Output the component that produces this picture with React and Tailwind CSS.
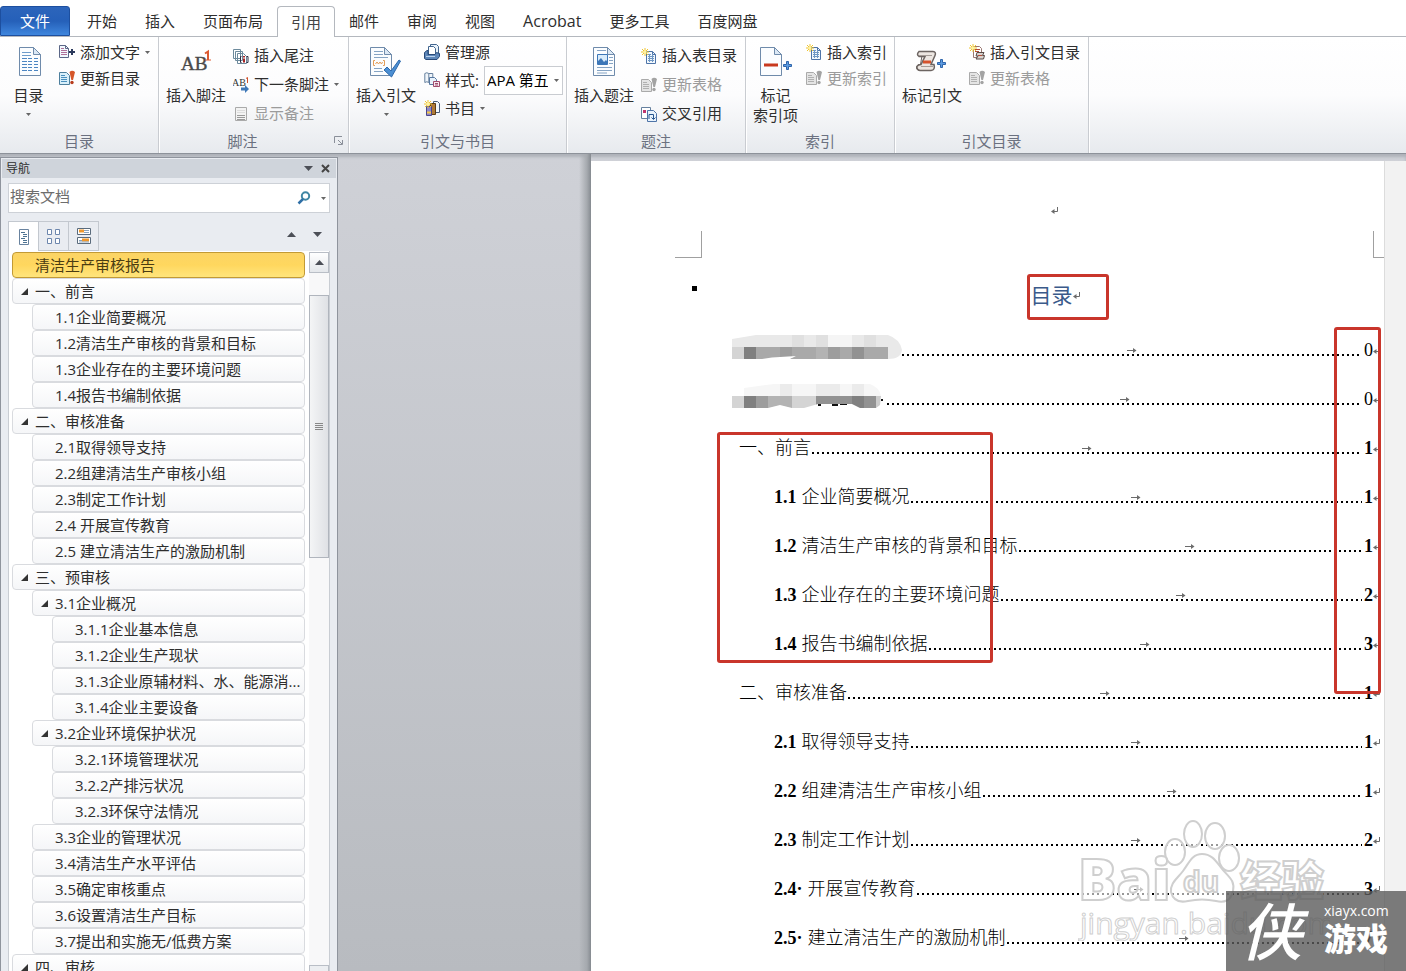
import React from "react";

const UI = "font-['Open_Sans','Noto_Sans_CJK_SC',sans-serif]";

const Caret = ({ className = "" }) => (
  <svg className={className} width="5" height="3" viewBox="0 0 5 3" aria-hidden="true">
    <path d="M0 0h5L2.500 3z" fill="#666" />
  </svg>
);

/* ---------- 16px icons ---------- */
const Svg16 = ({ children }) => (
  <svg className="shrink-0" width="16" height="16" viewBox="0 0 16 16" fill="none" aria-hidden="true">
    {children}
  </svg>
);
const SmallDoc = ({ x = 0, y = 0, stroke = "#5f7fa6", fill = "#f2f8fd", line = "#6f97c4" }) => (
  <g transform={`translate(${x} ${y})`}>
    <path d="M.5.5h6l3 3v9h-9z" fill={fill} stroke={stroke} />
    <path d="M6.500.5v3h3" stroke={stroke} />
    <path d="M2 3.500h3M2 5.500h6M2 7.500h6M2 9.500h6" stroke={line} />
  </g>
);
const Star = () => (
  <g>
    <path d="M4 0v8M0 4h8M1 1l6 6M7 1L1 7" stroke="#f0c52e" strokeWidth="1" />
    <circle cx="4" cy="4" r="1.500" fill="#fff3a0" />
  </g>
);
const AddTextIcon = () => (
  <Svg16>
    <SmallDoc y={1} stroke="#5b6787" line="#b0719a" />
    <path d="M13 5v6M10 8h6" stroke="#2b3a5c" strokeWidth="2" />
  </Svg16>
);
const UpdateIcon = ({ off }) => (
  <Svg16>
    <path d="M.5 2.500h7l3 3v9H.5z" fill={off ? "#e4e4e4" : "#d8effa"} stroke={off ? "#aaa" : "#4d7f9d"} />
    <path d="M2 5.500h4M2 7.500h6M2 9.500h6M2 11.500h6" stroke={off ? "#b0b0b0" : "#4a8fbd"} />
    <path d="M10.500 2q2.500-2.500 5.500 0L14 10h-1.600z" fill={off ? "#a3a3a3" : "#d5562a"} />
    <circle cx="13" cy="12.500" r="1.700" fill={off ? "#a3a3a3" : "#b73b1c"} />
  </Svg16>
);
const EndnoteIcon = () => (
  <Svg16>
    <path d="M.5 1.500h7v9h-7zM2.500 3.500h7v9h-7zM4.500 5.500h6l3 3v7h-9z" fill="#fff" stroke="#6d8a9c" />
    <path d="M8.500 8.500H7.500v6h1M13.500 8.500H15v6h-1.500" stroke="#2b2d42" />
    <path d="M11 8v1.500M11 10.500v4" stroke="#a82525" strokeWidth="2" />
  </Svg16>
);
const NextNoteIcon = () => (
  <Svg16>
    <text x="-1" y="9" fontSize="10" fontFamily="Liberation Serif" fill="#333">AB</text>
    <path d="M13 1.500l1.500-1V6" stroke="#d2512a" />
    <path d="M8 10.500h4V8l4 4-4 4v-2.500H8z" fill="#3f78b8" />
  </Svg16>
);
const ShowNotesIcon = () => (
  <Svg16>
    <path d="M2.500 1.500h11v13h-11z" fill="#f3f3f3" stroke="#aaa" />
    <path d="M4 4.500h8M4 6.500h8" stroke="#ddd" />
    <path d="M4 9.500h8M4 11.500h8M4 13.500h8" stroke="#999" />
  </Svg16>
);
const SourcesIcon = () => (
  <Svg16>
    <path d="M6.500.5h6l2 2v8h-8z" fill="#eaf3fb" stroke="#41658f" />
    <path d="M4.500 2.500h5l2 2v7h-7z" fill="#fff" stroke="#41658f" />
    <path d="M.5 8.500L3 6.500h1v4h7l1.500-2 3 1v3l-2.500 3H2l-1.500-1z" fill="#5d87b9" stroke="#294a79" />
    <path d="M2 12.500h9" stroke="#b9d1ec" />
  </Svg16>
);
const StyleIcon = () => (
  <Svg16>
    <path d="M.8 1.500q2-1.500 4 0v9q-2-1.500-4 0zM4.800 1.500h4v7" fill="#f0f5fa" stroke="#66809e" />
    <path d="M5.500 5.500h5l2 2v5h-7z" fill="#e8f2fb" stroke="#56779f" />
    <path d="M9.500 9.500h6v5h-6z" fill="#f7e8ef" stroke="#a04c6d" />
    <path d="M11 11.500h3M11 13h3" stroke="#a04c6d" />
  </Svg16>
);
const BibliographyIcon = () => (
  <Svg16>
    <path d="M9.500 1.500h4l2 2v9h-6z" fill="#f4f8fc" stroke="#495d7c" />
    <path d="M6.500 3.500h5v11h-5z" fill="#b07a38" stroke="#5b3d16" />
    <path d="M2.500 6.500h5v9h-5z" fill="#8f88c9" stroke="#4c478a" />
    <path d="M3 12.500h4" stroke="#f5c845" strokeWidth="2" />
    <Star />
  </Svg16>
);
const NewListIcon = () => (
  <Svg16>
    <SmallDoc x={5} y={3} stroke="#4e74a8" />
    <path d="M8.500 6v8M11.500 6v8" stroke="#6f97c4" />
    <Star />
  </Svg16>
);
const CrossRefIcon = () => (
  <Svg16>
    <path d="M.5 1.500h9v11h-9z" fill="#fff" stroke="#66809e" />
    <path d="M2 4h3v3H2z" fill="#c2356e" />
    <path d="M6.500 4.500h6l3 3v8h-9z" fill="#e9f3fc" stroke="#4e74a8" />
    <path d="M8 13V8.500h4.500V13m-2-1.500l2 2 2-2" stroke="#26558f" />
  </Svg16>
);
const AuthoritiesIcon = () => (
  <Svg16>
    <path d="M4.500 2.500h6l2 2v9h-8z" fill="#fff" stroke="#9a7770" />
    <path d="M6 5.500h5M6 7.500h4" stroke="#b54a39" />
    <path d="M8 8.500h7l-1.500 3h2l-1 3.500H7l2-3H7z" fill="#d9d2cd" stroke="#584b47" />
    <path d="M9 11.500h4" stroke="#b54a39" />
    <Star />
  </Svg16>
);

/* ---------- 36px icons ---------- */
const Svg36 = ({ children }) => (
  <svg width="36" height="36" viewBox="0 0 36 36" fill="none" aria-hidden="true">
    {children}
  </svg>
);
const BigPage = ({ x = 8, children }) => (
  <g transform={`translate(${x} 2)`}>
    <path d="M.5.5h14l7 7v21h-21z" fill="#fbfdff" stroke="#6f8bab" />
    <path d="M14.500.5v7h7z" fill="#dbe8f5" stroke="#6f8bab" />
    {children}
  </g>
);
const TocIcon = () => (
  <Svg36>
    <BigPage>
      <path d="M3 5.500h9M3 8.500h9" stroke="#6e9ccb" />
      <path d="M3 11.500h10M3 14.500h10M3 17.500h10M3 20.500h10M3 23.500h10" stroke="#4d86c2" strokeDasharray="5 1" />
      <path d="M15 11.500h4M15 14.500h4M15 17.500h4M15 20.500h4M15 23.500h4" stroke="#4d86c2" />
    </BigPage>
  </Svg36>
);
const FootnoteIcon = () => (
  <Svg36>
    <text x="3" y="25" fontSize="19" fontFamily="Liberation Serif" fill="#4a4a4a" stroke="#4a4a4a" strokeWidth=".4">AB</text>
    <path d="M27 8.500l3-2V15" stroke="#dc5a31" strokeWidth="2" />
    <path d="M27 15h6" stroke="#dc5a31" />
  </Svg36>
);
const CitationIcon = () => (
  <Svg36>
    <BigPage x={2}>
      <path d="M4 4.500h9M4 7.500h9M4 10.500h14M4 21.500h8M4 24.500h9" stroke="#86a4c4" />
      <path d="M5 13.500H3.500v5H5M13 13.500h1.500v5H13" stroke="#e39d59" />
      <path d="M5.500 17l1.500-2 1.500 2 1.500-2 1.500 2 1-2" stroke="#e39d59" />
    </BigPage>
    <path d="M16 25l3-3 4 4 8-11 1.500 1L23.500 32z" fill="#4b8ed2" stroke="#2e69ab" />
  </Svg36>
);
const CaptionIcon = () => (
  <Svg36>
    <BigPage x={7}>
      <path d="M4 3.500h9" stroke="#86a4c4" />
      <path d="M4.500 7.500h10v10h-10z" fill="#d8ebfa" stroke="#3d77b8" />
      <path d="M5 17v-3l3-3 3 4 2-2 1.500 2v2z" fill="#3d77b8" />
      <path d="M16 10.500h4M16 13.500h4M16 16.500h4M4 20.500h15M4 23.500h15M4 26h10" stroke="#86a4c4" />
    </BigPage>
  </Svg36>
);
const Plus = ({ x, y }) => (
  <path transform={`translate(${x} ${y})`} d="M3.500.5h2v3h3v2h-3v3h-2v-3h-3v-2h3z" fill="#5c9be0" stroke="#2f65ab" />
);
const IndexIcon = () => (
  <Svg36>
    <BigPage x={2}>
      <path d="M4 18h14" stroke="#c8391f" strokeWidth="3" />
    </BigPage>
    <Plus x={25} y={16} />
  </Svg36>
);
const MarkCitationIcon = () => (
  <Svg36>
    <path d="M8 10.500h10l-4 9q-1 5 3 6H6q-4-.5-3.500-4 1-2.500 4-2z" fill="#f4f0ed" stroke="#6c6461" />
    <path d="M5 6.500h14q3.500.5 2 4l-4 9h3q1.500 5.500-3 6H6q-3.500-.5-3-4 1-2 4-2l4-8H5q-3-2 0-5z" fill="#ece6e1" stroke="#6c6461" strokeWidth="1.500" />
    <path d="M5 10.500h13M7 21.500h12" stroke="#a59c97" />
    <path d="M9 17h8" stroke="#d6532c" strokeWidth="3" />
    <Plus x={23} y={14} />
  </Svg36>
);

/* ---------- ribbon ---------- */
const BigButton = ({ icon, lines, caret, width = "w-[74px]" }) => (
  <button type="button" className={`flex ${width} shrink-0 flex-col items-center pt-2`}>
    {icon}
    <span className="mt-1 leading-5">
      {lines.map((l) => (
        <span key={l} className="block">{l}</span>
      ))}
    </span>
    {caret && <Caret className="mt-2" />}
  </button>
);
const SmallButton = ({ icon, label, caret, off, h = "h-[29px]" }) => (
  <button type="button" disabled={off} className={`flex items-center gap-[5px] ${h} ${off ? "text-[#9b9b9b]" : ""}`}>
    {icon}
    <span>{label}</span>
    {caret && <Caret />}
  </button>
);
const Group = ({ title, width, launcher, children }) => (
  <section aria-label={title} className={`flex ${width} shrink-0 flex-col border-r border-[#c9ccd1] shadow-[1px_0_0_#fff]`}>
    <div className="flex flex-1">{children}</div>
    <div className="flex h-6 items-center text-[#6b7180]">
      <span className="flex-1 text-center">{title}</span>
      {launcher && (
        <button type="button" aria-label="脚注和尾注" className="mr-1 ml-2">
          <svg width="10" height="10" viewBox="0 0 10 10" fill="none">
            <path d="M.5 7V.5H8M4 4l4 4M8.500 4v4.500H4" stroke="#8a8f99" />
          </svg>
        </button>
      )}
    </div>
  </section>
);

const tabsBefore = ["开始", "插入", "页面布局"];
const tabsAfter = ["邮件", "审阅", "视图", "Acrobat", "更多工具", "百度网盘"];

const Ribbon = () => (
  <header className="shrink-0 bg-white">
    <nav className="flex h-[37px] items-end border-b border-[#b4b8be] pt-1.5">
      <button type="button" className="h-[30px] w-[70px] rounded-t-[3px] border border-[#1d4f9f] bg-linear-to-b from-[#2c65bb] via-[#2560b9] to-[#3f86dd] text-white">文件</button>
      <div className="w-[3px]" />
      {tabsBefore.map((t) => (
        <button type="button" key={t} className="h-[30px] px-3.5">{t}</button>
      ))}
      <button type="button" className="-mb-px h-[31px] rounded-t border border-b-0 border-[#b4b8be] bg-white px-[13px] text-[#444]">引用</button>
      {tabsAfter.map((t) => (
        <button type="button" key={t} className={`h-[30px] px-3.5 ${t === "Acrobat" ? "text-[16px]" : ""}`}>{t}</button>
      ))}
    </nav>
    <div className="flex h-[117px] border-b border-[#8d929a] bg-linear-to-b from-white via-[#fcfcfd] to-[#e7eaee]">
      <Group title="目录" width="w-[159px]">
        <BigButton icon={<TocIcon />} lines={["目录"]} caret width="w-[57px]" />
        <div className="pt-0.5 pl-0.5">
          <SmallButton h="h-[26px]" icon={<AddTextIcon />} label="添加文字" caret />
          <SmallButton h="h-[26px]" icon={<UpdateIcon />} label="更新目录" />
        </div>
      </Group>
      <Group title="脚注" width="w-[190px]" launcher>
        <BigButton icon={<FootnoteIcon />} lines={["插入脚注"]} />
        <div className="pt-1">
          <SmallButton icon={<EndnoteIcon />} label="插入尾注" />
          <SmallButton icon={<NextNoteIcon />} label="下一条脚注" caret />
          <SmallButton icon={<ShowNotesIcon />} label="显示备注" off />
        </div>
      </Group>
      <Group title="引文与书目" width="w-[218px]">
        <BigButton icon={<CitationIcon />} lines={["插入引文"]} caret />
        <div className="pt-px pl-px">
          <SmallButton h="h-7" icon={<SourcesIcon />} label="管理源" />
          <div className="flex h-7 items-center gap-[5px]">
            <StyleIcon />
            <label htmlFor="cite-style">样式:</label>
            <span className="relative flex items-center">
              <select id="cite-style" className="h-[29px] w-[79px] appearance-none overflow-hidden border border-[#c9ccd1] bg-white pr-3.5 pl-0.5 text-black">
                <option>APA 第五版</option>
              </select>
              <Caret className="pointer-events-none absolute right-1" />
            </span>
          </div>
          <SmallButton h="h-7" icon={<BibliographyIcon />} label="书目" caret />
        </div>
      </Group>
      <Group title="题注" width="w-[179px]">
        <BigButton icon={<CaptionIcon />} lines={["插入题注"]} />
        <div className="pt-1">
          <SmallButton icon={<NewListIcon />} label="插入表目录" />
          <SmallButton icon={<UpdateIcon off />} label="更新表格" off />
          <SmallButton icon={<CrossRefIcon />} label="交叉引用" />
        </div>
      </Group>
      <Group title="索引" width="w-[149px]">
        <BigButton icon={<IndexIcon />} lines={["标记", "索引项"]} width="w-[59px]" />
        <div className="pt-0.5 pl-px">
          <SmallButton h="h-[26px]" icon={<NewListIcon />} label="插入索引" />
          <SmallButton h="h-[26px]" icon={<UpdateIcon off />} label="更新索引" off />
        </div>
      </Group>
      <Group title="引文目录" width="w-[194px]">
        <BigButton icon={<MarkCitationIcon />} lines={["标记引文"]} />
        <div className="pt-0.5">
          <SmallButton h="h-[26px]" icon={<AuthoritiesIcon />} label="插入引文目录" />
          <SmallButton h="h-[26px]" icon={<UpdateIcon off />} label="更新表格" off />
        </div>
      </Group>
    </div>
  </header>
);

/* ---------- navigation pane ---------- */
const outline = [
  [0, "一、前言", true],
  [1, "1.1企业简要概况"],
  [1, "1.2清洁生产审核的背景和目标"],
  [1, "1.3企业存在的主要环境问题"],
  [1, "1.4报告书编制依据"],
  [0, "二、审核准备", true],
  [1, "2.1取得领导支持"],
  [1, "2.2组建清洁生产审核小组"],
  [1, "2.3制定工作计划"],
  [1, "2.4 开展宣传教育"],
  [1, "2.5 建立清洁生产的激励机制"],
  [0, "三、预审核", true],
  [1, "3.1企业概况", true],
  [2, "3.1.1企业基本信息"],
  [2, "3.1.2企业生产现状"],
  [2, "3.1.3企业原辅材料、水、能源消..."],
  [2, "3.1.4企业主要设备"],
  [1, "3.2企业环境保护状况", true],
  [2, "3.2.1环境管理状况"],
  [2, "3.2.2产排污状况"],
  [2, "3.2.3环保守法情况"],
  [1, "3.3企业的管理状况"],
  [1, "3.4清洁生产水平评估"],
  [1, "3.5确定审核重点"],
  [1, "3.6设置清洁生产目标"],
  [1, "3.7提出和实施无/低费方案"],
  [0, "四、审核", true],
];
const indent = ["ml-0", "ml-5", "ml-10"];

const OutlineItem = ({ level, label, open, selected }) => (
  <li className={indent[level]}>
    <button
      type="button"
      className={`flex h-[26px] w-full items-center rounded border whitespace-nowrap ${
        selected
          ? "border-[#c29a35] bg-linear-to-b from-[#fbd465] via-[#ffd75e] to-[#ffe57c] text-[#4a3c12]"
          : "border-[#d9dbdf] bg-linear-to-b from-white to-[#f5f6f8]"
      }`}
    >
      <span className="flex w-[22px] shrink-0 justify-center">
        {open && (
          <svg width="7" height="7" viewBox="0 0 7 7" aria-hidden="true">
            <path d="M7 0v7H0z" fill="#333" />
          </svg>
        )}
      </span>
      {label}
    </button>
  </li>
);

const Triangle = ({ up }) => (
  <svg width="9" height="5" viewBox="0 0 9 5" aria-hidden="true">
    <path d={up ? "M0 5h9L4.500 0z" : "M0 0h9L4.500 5z"} fill="#4c4f57" />
  </svg>
);

const NavPane = () => (
  <aside className="mt-[3px] flex w-[338px] shrink-0 flex-col border border-b-0 border-[#8f949d] bg-[#e9ecf1] pt-px">
    <div className="mx-px flex h-[19px] items-center bg-[#cfd4db] pr-1.5 pl-1 text-[12px]">
      <h2 className="flex-1">导航</h2>
      <button type="button" aria-label="任务窗格选项" className="mr-2"><Triangle /></button>
      <button type="button" aria-label="关闭">
        <svg width="9" height="9" viewBox="0 0 9 9" fill="none">
          <path d="M1 1l7 7M8 1L1 8" stroke="#444" strokeWidth="2" />
        </svg>
      </button>
    </div>
    <div className="mx-[7px] mt-[5px] flex h-[30px] items-center border border-[#cdd1d7] bg-white pr-[3px] pl-px">
      <input aria-label="搜索文档" placeholder="搜索文档" className="min-w-0 flex-1 bg-transparent pb-1 outline-none placeholder:text-[#6d6d6d]" />
      <button type="button" aria-label="搜索" className="mr-2.5">
        <svg width="14" height="14" viewBox="0 0 14 14" fill="none">
          <circle cx="8.500" cy="5" r="3.700" stroke="#3f86a3" strokeWidth="2" />
          <path d="M6 8l-4.500 4.500" stroke="#2f6fa6" strokeWidth="2.500" />
        </svg>
      </button>
      <Caret />
    </div>
    <div className="mx-[7px] mt-2 flex h-[30px] items-center">
      <button type="button" aria-label="浏览标题" className="flex h-full w-[31px] items-center justify-center border border-b-0 border-[#c3c8cf] bg-white">
        <svg width="10" height="16" viewBox="0 0 10 16" fill="none">
          <path d="M.5.5h9v15h-9z" fill="#fff" stroke="#69839f" />
          <path d="M2 3.500h4M4 5.500h4M4 7.500h4M2 9.500h4M4 11.500h4M4 13.500h4" stroke="#4d7392" />
        </svg>
      </button>
      <button type="button" aria-label="浏览页面" className="flex h-full w-[30px] items-center justify-center border-y border-r border-[#c3c8cf]">
        <svg width="13" height="15" viewBox="0 0 13 15" fill="none">
          <path d="M.5.5h4v5h-4zM8.500.5h4v5h-4zM.5 9.500h4v5h-4zM8.500 9.500h4v5h-4z" fill="#fff" stroke="#6c86ad" />
        </svg>
      </button>
      <button type="button" aria-label="浏览搜索结果" className="flex h-full w-[30px] items-center justify-center border-y border-r border-[#c3c8cf]">
        <svg width="14" height="16" viewBox="0 0 14 16" fill="none">
          <path d="M.5.5h13v6h-13zM.5 9.500h13v6h-13z" fill="#fff" stroke="#5a6b7c" />
          <path d="M2 3h5M5 12h7" stroke="#f0982d" strokeWidth="3" />
          <path d="M7 2.500h5M7 4.500h5M2 12.500h3M2 14h10" stroke="#89a2bb" />
        </svg>
      </button>
      <div className="flex-1" />
      <button type="button" aria-label="上一标题" className="mr-[17px] mb-1"><Triangle up /></button>
      <button type="button" aria-label="下一标题" className="mr-2 mb-1"><Triangle /></button>
    </div>
    <div className="mx-[7px] flex min-h-0 flex-1 border-x border-[#c9cdd3] bg-white pt-px">
      <ul className="min-w-0 flex-1 overflow-hidden pl-[3px]">
        <OutlineItem level={0} label="清洁生产审核报告" selected />
        {outline.map(([level, label, open]) => (
          <OutlineItem key={label} level={level} label={label} open={open} />
        ))}
      </ul>
      <div className="ml-1 flex w-5 shrink-0 flex-col bg-[#f8f8f9]" aria-hidden="true">
        <div className="flex h-[21px] items-center justify-center border border-[#b9bec6] bg-linear-to-b from-white to-[#e4e7eb]">
          <Triangle up />
        </div>
        <div className="mt-[22px] flex h-[263px] flex-col items-center justify-center gap-px border border-[#b0b5bd] bg-linear-to-r from-[#f4f5f6] to-[#dfe1e5]">
          <i className="h-px w-2 bg-[#888]" />
          <i className="h-px w-2 bg-[#888]" />
          <i className="h-px w-2 bg-[#888]" />
          <i className="h-px w-2 bg-[#888]" />
        </div>
        <div className="flex-1" />
        <div className="h-1.5 border border-b-0 border-[#b9bec6] bg-[#eceef1]" />
      </div>
    </div>
  </aside>
);

/* ---------- document ---------- */
const ReturnMark = () => (
  <svg className="shrink-0" width="8" height="8" viewBox="0 0 8 8" fill="none" aria-hidden="true">
    <path d="M6.500 0v4.500H2" stroke="#6b6b6b" />
    <path d="M0 4.500L3.500 2v5z" fill="#6b6b6b" />
  </svg>
);
const TabArrow = () => (
  <svg className="absolute top-px left-1/2 -translate-x-1/2" width="10" height="7" viewBox="0 0 10 7" fill="none" aria-hidden="true">
    <path d="M0 3.500h8" stroke="#6b6b6b" />
    <path d="M6 1l3.500 2.500L6 6z" fill="#6b6b6b" />
  </svg>
);

const tone = ["fill-[#d4d4d4]", "fill-[#808080]", "fill-[#9d9d9d]", "fill-[#a9a9a9]", "fill-[#929292]", "fill-[#b3b3b3]"];
const mosaicA = [0, 1, 3, 3, 2, 3, 3, 5, 2, 3, 4, 3, 3];
const mosaicB = [0, 1, 2, 5, 5, 0, 0, 4, 4, 4, 1, 4];

const MosaicA = () => (
  <svg className="mb-2 shrink-0" width="170" height="24" viewBox="0 0 170 24" aria-hidden="true">
    <path d="M0 4L24 0h132q12 4 14 15-1 9-14 9H0z" fill="#e9e9e9" />
    <path d="M60 0h12v12H60zM84 0h12v12H84zM132 0h12v12h-12z" fill="#e0e0e0" />
    <path d="M96 0h24v12H96z" fill="#f5f5f5" />
    {mosaicA.map((t, i) => (
      <rect key={i} x={i * 12} y="12" width="12" height="12" className={tone[t]} />
    ))}
    <path d="M30 24l10-1.500 24-1.500-6 3z" fill="#fff" />
  </svg>
);
const MosaicB = () => (
  <svg className="mr-1 mb-2 shrink-0" width="151" height="24" viewBox="0 0 151 24" aria-hidden="true">
    <path d="M12 4l30-4h96q10 4 11 12H12z" fill="#f6f6f6" />
    <path d="M48 0h12v12H48zM84 0h24v12H84zM120 0h12v12h-12z" fill="#ebebeb" />
    {mosaicB.map((t, i) => (
      <rect key={i} x={i * 12} y="12" width="12" height="12" className={tone[t]} />
    ))}
    <path d="M144 12h5l-1 9-4 3z" fill="#ccc" />
    <path d="M36 24l12-3 12 3zM72 24l14-4 34 0 8 4z" fill="#fff" />
    <path d="M86 20h3v2h-3zM100 20h6v2h-6zM108 20h7v1h-7zM149 15h2v2h-2z" fill="#111" />
  </svg>
);

const toc = [
  { art: <MosaicA />, page: 0, plain: true },
  { art: <MosaicB />, page: 0, plain: true },
  { text: "一、前言", page: 1 },
  { num: "1.1", text: "企业简要概况", page: 1 },
  { num: "1.2", text: "清洁生产审核的背景和目标", page: 1 },
  { num: "1.3", text: "企业存在的主要环境问题", page: 2 },
  { num: "1.4", text: "报告书编制依据", page: 3 },
  { text: "二、审核准备", page: 1 },
  { num: "2.1", text: "取得领导支持", page: 1 },
  { num: "2.2", text: "组建清洁生产审核小组", page: 1 },
  { num: "2.3", text: "制定工作计划", page: 2 },
  { num: "2.4·", text: "开展宣传教育", page: 3 },
  { num: "2.5·", text: "建立清洁生产的激励机制", page: 7 },
];

const TocRow = ({ art, num, text, page, plain }) => (
  <li className={`flex h-[49px] items-center ${num ? "pl-[42px]" : art ? "" : "pl-[7px]"}`}>
    {art}
    {num && <b className="mr-[5px]">{num}</b>}
    {text && <span className="mr-px font-light">{text}</span>}
    <span className="relative h-2.5 flex-1 bg-[linear-gradient(90deg,#000_40%,transparent_40%)] bg-[length:5px_2px] bg-bottom-left bg-repeat-x">
      <TabArrow />
    </span>
    <span className={`ml-0.5 ${plain ? "" : "font-bold"}`}>{page}</span>
    <ReturnMark />
  </li>
);

const Page = () => (
  <main className="mt-[7px] ml-[253px] min-w-0 flex-1 overflow-hidden bg-white font-['Liberation_Serif','Noto_Sans_CJK_SC',serif] text-[18px] text-black">
    <div className="flex justify-center pt-[46px] pl-[134px]">
      <ReturnMark />
    </div>
    <div className="mt-4 flex justify-between pl-[84px]">
      <i className="h-[27px] w-[27px] border-r border-b border-[#a0a0a0]" />
      <i className="h-[27px] w-[11px] border-b border-l border-[#a0a0a0]" />
    </div>
    <div className="mt-[22px] flex h-8 items-center pl-[101px]">
      <i className="mb-4 h-[5px] w-[5px] bg-black" />
      <div className="flex flex-1 justify-center pl-[30px]">
        <h1 className="relative flex items-center text-[21px] leading-8 text-[#3a5a8a]">
          目录
          <ReturnMark />
          <i className="absolute -top-1.5 -left-1 h-[46px] w-[82px] rounded-[3px] border-3 border-[#c9352b]" />
        </h1>
      </div>
    </div>
    <div className="relative mt-3.5">
      <ol className="pr-[3px] pl-[141px]">
        {toc.map((r, i) => (
          <TocRow key={i} {...r} />
        ))}
      </ol>
      <i className="absolute top-[106px] left-[126px] h-[231px] w-[276px] rounded-[3px] border-3 border-[#c9352b]" />
      <i className="absolute top-px right-[3px] h-[367px] w-[47px] rounded-[3px] border-3 border-[#c9352b]" />
    </div>
  </main>
);

/* ---------- overlays ---------- */
const Watermark = () => (
  <svg className="absolute right-[76px] bottom-[30px]" width="252" height="126" viewBox="0 0 252 126" aria-hidden="true">
    <g className="fill-white/60 stroke-[#cfcfcf]" strokeWidth="2">
      <ellipse cx="115" cy="19" rx="9" ry="13" />
      <ellipse cx="137" cy="21" rx="10" ry="13" />
      <ellipse cx="97" cy="37" rx="10" ry="13" />
      <ellipse cx="151" cy="43" rx="10" ry="13" />
      <path d="M124 39c11 0 15 9 21 16 7 8 12 11 10 21-2 10-9 12-17 10-9-2-19-2-28 0-9 2-15-1-17-9-1-9 6-13 12-21 6-8 9-17 19-17z" />
      <g fontFamily="Open Sans, Noto Sans CJK SC, sans-serif" fontWeight="800">
        <text x="0" y="85" fontSize="57">Bai</text>
        <text x="105" y="77" fontSize="28" fontWeight="700">du</text>
        <text x="162" y="81" fontSize="42" fontWeight="900">经验</text>
        <text x="2" y="119" fontSize="30" fontWeight="400" strokeWidth="1">jingyan.baidu.com</text>
      </g>
    </g>
  </svg>
);
const SiteBadge = () => (
  <div className="absolute right-0 bottom-0 flex h-20 w-[180px] items-center bg-[#5b5b5b]/80 pl-3.5 font-['Open_Sans','Noto_Sans_CJK_SC',sans-serif] text-white">
    <span className="w-[84px] text-[62px] leading-none font-medium italic">侠</span>
    <span className="flex flex-col">
      <span className="text-[14px] leading-4">xiayx.com</span>
      <span className="text-[32px] leading-10 font-black">游戏</span>
    </span>
  </div>
);

export default function App() {
  return (
    <div className={`relative flex h-screen flex-col overflow-hidden text-[15px] text-[#2e2e2e] ${UI}`}>
      <Ribbon />
      <div className="flex min-h-0 flex-1 bg-linear-to-b from-[#cfd1d7] to-[#b8bbc0] shadow-[inset_0_3px_3px_#aeb2b9]">
        <NavPane />
        <div className="flex min-w-0 flex-1 bg-[linear-gradient(90deg,transparent_241px,#a5a9ae_249px,#858a90_253px,transparent_253px)]">
          <Page />
        </div>
        <div className="mt-[7px] w-[22px] shrink-0 border-l border-[#dcdcdc] bg-[#f2f2f2]" />
      </div>
      <Watermark />
      <SiteBadge />
    </div>
  );
}
